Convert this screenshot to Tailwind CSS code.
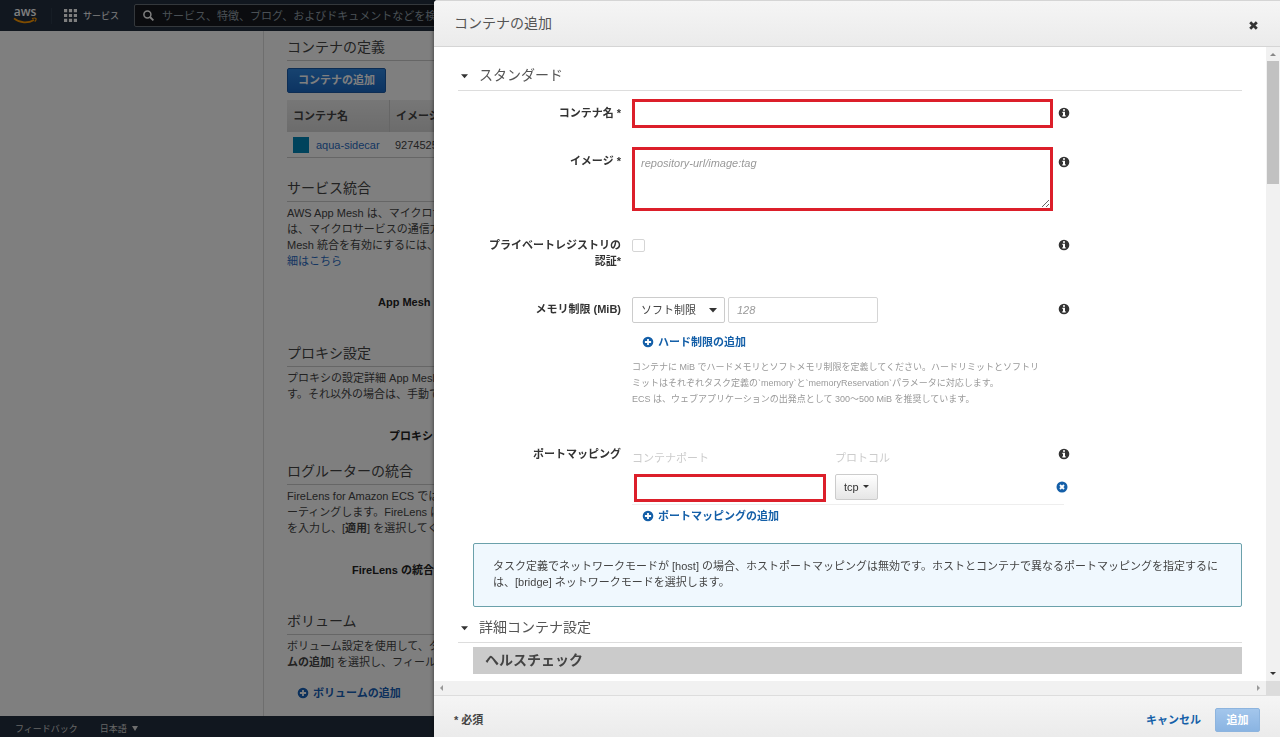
<!DOCTYPE html>
<html lang="ja">
<head>
    <meta charset="UTF-8">
    <meta name="viewport" content="width=device-width, initial-scale=1.0">
    <title>コンテナの追加</title>
    <script src="https://cdn.jsdelivr.net/npm/@tailwindcss/browser@4"></script>
    <style>
        body {
            font-family: 'Liberation Sans', 'Noto Sans CJK JP', sans-serif;
        }
    </style>
</head>
<body class="h-screen overflow-hidden bg-white text-[11px] leading-4 text-[#444]">
    <!-- Shared icons -->
    <svg class="hidden">
        <symbol id="icon-info" viewBox="0 0 12 12">
            <circle cx="6" cy="6" r="5.3" fill="#333"/>
            <path d="M5 2.2h2v1.6H5zM4.4 4.8H7v3.4h.7v1.2H4.3V8.2H5V6h-.6z" fill="#fff"/>
        </symbol>
        <symbol id="icon-plus" viewBox="0 0 12 12">
            <circle cx="6" cy="6" r="5.3" fill="currentColor"/>
            <path d="M5.1 2.9h1.8v2.2h2.2v1.8H6.9v2.2H5.1V6.9H2.9V5.1h2.2z" fill="#fff"/>
        </symbol>
        <symbol id="icon-remove" viewBox="0 0 12 12">
            <circle cx="6" cy="6" r="5.5" fill="currentColor"/>
            <path d="M4 4l4 4M8 4l-4 4" stroke="#fff" stroke-width="1.9"/>
        </symbol>
        <symbol id="icon-caret" viewBox="0 0 8 5">
            <path d="M0 0h8L4 4.6z" fill="#333"/>
        </symbol>
    </svg>

    <div class="flex h-full flex-col overflow-hidden whitespace-nowrap">
        <header class="flex h-[31px] shrink-0 items-center bg-[#232f3e] text-white">
            <a href="#" aria-label="aws" class="ml-[13px] flex w-6 flex-col items-center">
                <span class="font-['Open_Sans'] text-[12px] leading-[10px] font-semibold">aws</span>
                <svg class="h-[7px] w-6" viewBox="0 0 24 7" fill="none" stroke="#ff9900">
                    <path d="M1 1.4C7 6.4 15 6.6 21 3" stroke-width="1.7"/>
                    <path d="M19 1.6c1.8-.7 3.6-.6 4 0 .3.6-.3 2-1.2 3" stroke-width="1.2"/>
                </svg>
            </a>
            <span class="ml-3.5 h-4 w-px bg-[#2c3a4b]"></span>
            <button class="ml-3 flex items-center gap-1.5 text-[9px]">
                <svg class="size-[13px]" viewBox="0 0 13 13" fill="#fff">
                    <path d="M0 0h3.2v3.2H0zM4.9 0h3.2v3.2H4.9zM9.8 0H13v3.2H9.8zM0 4.9h3.2v3.2H0zM4.9 4.9h3.2v3.2H4.9zM9.8 4.9H13v3.2H9.8zM0 9.8h3.2V13H0zM4.9 9.8h3.2V13H4.9zM9.8 9.8H13V13H9.8z"/>
                </svg>
                サービス
            </button>
            <label class="ml-[15px] flex h-[23px] w-[560px] items-center gap-2 rounded-xs border border-[#687078] bg-[#16191f] pl-2">
                <svg class="size-[11px] shrink-0" viewBox="0 0 11 11" fill="none" stroke="#fff">
                    <circle cx="4.4" cy="4.4" r="3.5" stroke-width="1.5"/>
                    <path d="M7 7l3.4 3.4" stroke-width="1.8"/>
                </svg>
                <input type="search" aria-label="検索" placeholder="サービス、特徴、ブログ、およびドキュメントなどを検索" class="w-full text-[11px] outline-none placeholder:text-[#95a0aa]">
            </label>
        </header>

        <div class="flex min-h-0 flex-1">
            <nav class="w-[264px] shrink-0 border-r border-[#ddd]"></nav>
            <main class="min-w-0 flex-1 overflow-hidden pt-1.5 pl-[23px]">
                <h2 class="border-b border-[#ccc] pb-[3px] text-sm leading-5">コンテナの定義</h2>
                <button class="mt-[7px] block h-[25px] rounded-xs border border-[#1a5ba8] bg-linear-to-b from-[#2e86e0] to-[#1968c4] px-[10px] pb-0.5 font-bold text-white">コンテナの追加</button>
                <table class="mt-[7px] w-full table-fixed border-separate border-spacing-0 text-left">
                    <thead>
                        <tr class="h-8 bg-linear-to-b from-[#eee] to-[#d8d8d8]">
                            <th class="w-[103px] border-r border-[#ccc] pl-1.5">コンテナ名</th>
                            <th class="pl-1.5">イメージ</th>
                        </tr>
                    </thead>
                    <tbody>
                        <tr class="h-[26px]">
                            <td class="border-b border-[#ccc] pl-1.5">
                                <div class="flex items-center gap-[7px]">
                                    <span class="size-4 bg-[#0087b8]"></span>
                                    <a href="#" class="text-[#2a6cc4]">aqua-sidecar</a>
                                </div>
                            </td>
                            <td class="border-b border-[#ccc] pl-[5px]">927452518</td>
                        </tr>
                    </tbody>
                </table>

                <h2 class="mt-5 border-b border-[#ccc] pb-[3px] text-sm leading-5">サービス統合</h2>
                <p class="mt-[3px]">AWS App Mesh は、マイクロサー<br>は、マイクロサービスの通信方法<br>Mesh 統合を有効にするには、次<br><a href="#" class="text-[#2a6cc4]">細はこちら</a></p>
                <p class="mt-[25px] pl-[91px] font-bold text-[#222]">App Mesh</p>

                <h2 class="mt-[33px] border-b border-[#ccc] pb-[3px] text-sm leading-5">プロキシ設定</h2>
                <p class="mt-[3px]">プロキシの設定詳細 App Mesh<br>す。それ以外の場合は、手動で</p>
                <p class="mt-[26px] pl-[102px] font-bold text-[#222]">プロキシ</p>

                <h2 class="mt-[17px] border-b border-[#ccc] pb-[3px] text-sm leading-5">ログルーターの統合</h2>
                <p class="mt-[3px]">FireLens for Amazon ECS では<br>ーティングします。FireLens は<br>を入力し、[<b>適用</b>] を選択してく</p>
                <p class="mt-[26px] pl-[65px] font-bold text-[#222]">FireLens の統合</p>

                <h2 class="mt-[33px] border-b border-[#ccc] pb-[3px] text-sm leading-5">ボリューム</h2>
                <p class="mt-[3px]">ボリューム設定を使用して、タ<br><b>ムの追加</b>] を選択し、フィール</p>
                <button class="mt-[15px] ml-2.5 flex items-center gap-1 font-bold text-[#1660b8]">
                    <svg class="size-3"><use href="#icon-plus"/></svg>
                    ボリュームの追加
                </button>
            </main>
        </div>

        <footer class="flex h-[21px] shrink-0 items-center gap-[22px] bg-[#232f3e] pt-1 pl-[15px] text-[9px] text-[#ccc]">
            <a href="#">フィードバック</a>
            <button class="flex items-center gap-[5px]">日本語
                <svg class="h-[5px] w-1.5" viewBox="0 0 6 5"><path d="M0 0h6L3 5z" fill="#ddd"/></svg>
            </button>
        </footer>
    </div>

    <div class="fixed inset-0 bg-black/50"></div>

    <div role="dialog" aria-labelledby="dialog-title" class="fixed inset-y-0 right-0 left-[434px] flex flex-col overflow-hidden rounded-tl-sm bg-white shadow-[0_0_4px_rgba(0,0,0,0.6)]">
        <header class="flex h-[47px] shrink-0 items-center justify-between border-t border-b border-[#d5d5d5] bg-linear-to-b from-[#f5f5f5] to-[#ebebeb] pr-[22px] pl-5">
            <h1 id="dialog-title" class="pb-0.5 text-sm text-[#555]">コンテナの追加</h1>
            <button aria-label="閉じる" class="pt-1">
                <svg class="size-[9px]" viewBox="0 0 9 9" stroke="#333" stroke-width="2.8"><path d="M1.2 1.2l6.6 6.6M7.8 1.2L1.2 7.8"/></svg>
            </button>
        </header>

        <div class="grid min-h-0 flex-1 grid-cols-[minmax(0,1fr)_14px] grid-rows-[minmax(0,1fr)_14px]">
            <form class="overflow-hidden px-6 pt-[18px]">
                <h2 class="flex items-center gap-[11px] border-b border-[#ddd] pb-[5px] pl-[3px] text-sm leading-5 text-[#555]">
                    <svg class="mt-0.5 h-[5px] w-[7px]"><use href="#icon-caret"/></svg>
                    スタンダード
                </h2>

                <div class="mt-2 flex">
                    <label for="name" class="w-[163px] shrink-0 pt-1.5 text-right font-bold text-[#333]">コンテナ名 *</label>
                    <input id="name" type="text" class="ml-[11px] h-[29px] w-[421px] border-3 border-[#dc1f2a] px-1.5">
                    <svg class="mt-2 ml-[5px] size-3"><use href="#icon-info"/></svg>
                </div>

                <div class="mt-[19px] flex">
                    <label for="image" class="w-[163px] shrink-0 pt-1.5 text-right font-bold text-[#333]">イメージ *</label>
                    <textarea id="image" placeholder="repository-url/image:tag" class="ml-[11px] h-16 w-[421px] border-3 border-[#dc1f2a] px-1.5 py-[5px] placeholder:text-[#999] placeholder:italic"></textarea>
                    <svg class="mt-[9px] ml-[5px] size-3"><use href="#icon-info"/></svg>
                </div>

                <div class="mt-[26px] flex">
                    <label for="private" class="w-[163px] shrink-0 text-right font-bold text-[#333]">プライベートレジストリの<br>認証*</label>
                    <div class="ml-[11px] w-[421px] pt-0.5">
                        <input id="private" type="checkbox" class="block size-[13px] appearance-none rounded-xs border border-[#d5d5d5] bg-white">
                    </div>
                    <svg class="mt-[2px] ml-[5px] size-3"><use href="#icon-info"/></svg>
                </div>

                <div class="mt-7 flex">
                    <label for="memory" class="w-[163px] shrink-0 pt-1 text-right font-bold text-[#333]">メモリ制限 (MiB)</label>
                    <div class="ml-[11px] w-[421px]">
                        <div class="flex gap-[3px]">
                            <div class="relative">
                                <select aria-label="制限の種類" class="h-[26px] w-[93px] appearance-none rounded-xs border border-[#ccc] bg-white pl-2">
                                    <option>ソフト制限</option>
                                    <option>ハード制限</option>
                                </select>
                                <svg class="pointer-events-none absolute top-[11px] right-2 h-[5px] w-2"><use href="#icon-caret"/></svg>
                            </div>
                            <input id="memory" type="text" placeholder="128" class="h-[26px] w-[150px] rounded-xs border border-[#d5d5d5] px-2 placeholder:text-[#999] placeholder:italic">
                        </div>
                        <button type="button" class="mt-[11px] ml-2.5 flex items-center gap-1 font-bold text-[#145fa8]">
                            <svg class="size-3"><use href="#icon-plus"/></svg>
                            ハード制限の追加
                        </button>
                        <p class="mt-[9px] text-[9px] leading-4 whitespace-nowrap text-[#999]">コンテナに MiB でハードメモリとソフトメモリ制限を定義してください。ハードリミットとソフトリ<br>ミットはそれぞれタスク定義の`memory`と`memoryReservation`パラメータに対応します。<br>ECS は、ウェブアプリケーションの出発点として 300～500 MiB を推奨しています。</p>
                    </div>
                    <svg class="mt-1.5 ml-[5px] size-3"><use href="#icon-info"/></svg>
                </div>

                <div class="mt-[39px] flex">
                    <span class="w-[163px] shrink-0 text-right font-bold text-[#333]">ポートマッピング</span>
                    <div class="ml-[11px] w-[432px]">
                        <div class="flex border-b border-[#eee] pt-1 pb-0.5">
                            <div class="w-[203px]">
                                <label for="port" class="block text-[#ccc]">コンテナポート</label>
                                <input id="port" type="text" class="mt-2 ml-0.5 block h-7 w-48 border-3 border-[#dc1f2a] px-1.5">
                            </div>
                            <div class="flex-1">
                                <label for="protocol" class="block text-[#ccc]">プロトコル</label>
                                <div class="relative mt-2 w-[43px]">
                                    <select id="protocol" class="h-[26px] w-full appearance-none rounded-xs border border-[#ccc] bg-linear-to-b from-white to-[#e6e6e6] pl-2 text-[#333]">
                                        <option>tcp</option>
                                        <option>udp</option>
                                    </select>
                                    <svg class="pointer-events-none absolute top-[11px] right-[9px] h-[3px] w-1.5" viewBox="0 0 6 3"><path d="M0 0h6L3 3z" fill="#333"/></svg>
                                </div>
                            </div>
                            <button type="button" aria-label="削除" class="mt-[31px] mr-[-4px] size-3 self-start text-[#145fa8]">
                                <svg class="size-3"><use href="#icon-remove"/></svg>
                            </button>
                        </div>
                        <button type="button" class="mt-[3px] ml-2.5 flex items-center gap-1 font-bold text-[#145fa8]">
                            <svg class="size-3"><use href="#icon-plus"/></svg>
                            ポートマッピングの追加
                        </button>
                    </div>
                    <svg class="mt-[2px] -ml-1.5 size-3"><use href="#icon-info"/></svg>
                </div>

                <div class="mt-[19px] ml-[15px] rounded-xs border border-[#6ba1ab] bg-[#f0f8fe] px-[19px] pt-[14px] pb-4">
                    タスク定義でネットワークモードが [host] の場合、ホストポートマッピングは無効です。ホストとコンテナで異なるポートマッピングを指定するには、[bridge] ネットワークモードを選択します。
                </div>

                <h2 class="mt-2.5 flex items-center gap-[11px] border-b border-[#ddd] pb-[5px] pl-[3px] text-sm leading-5 text-[#555]">
                    <svg class="mt-0.5 h-[5px] w-[7px]"><use href="#icon-caret"/></svg>
                    詳細コンテナ設定
                </h2>
                <h3 class="mt-1 ml-[15px] h-[27px] bg-[#cbcbcb] pl-3 text-sm leading-[26px] font-bold">ヘルスチェック</h3>
            </form>

            <!-- Vertical scrollbar -->
            <div class="flex flex-col items-center bg-[#f1f1f1]">
                <svg class="size-[14px] shrink-0" viewBox="0 0 14 14"><path d="M4 9h6L7 6z" fill="#888"/></svg>
                <div class="h-[123px] w-3 bg-[#c1c1c1]"></div>
                <svg class="mt-auto size-[14px] shrink-0" viewBox="0 0 14 14"><path d="M4 5h6L7 8z" fill="#333"/></svg>
            </div>

            <!-- Horizontal scrollbar -->
            <div class="flex justify-between bg-[#f1f1f1]">
                <svg class="size-[14px]" viewBox="0 0 14 14"><path d="M9 4v6L6 7z" fill="#999"/></svg>
                <svg class="size-[14px]" viewBox="0 0 14 14"><path d="M5 4v6l3-3z" fill="#999"/></svg>
            </div>
            <div class="bg-[#dcdcdc]"></div>
        </div>

        <footer class="flex h-[42px] shrink-0 items-center border-t border-[#ddd] bg-linear-to-b from-[#f5f5f5] to-[#ebebeb] pt-1.5 pr-5 pl-5 font-bold">
            <span>* 必須</span>
            <button class="ml-auto text-[#145fa8]">キャンセル</button>
            <button disabled class="ml-[14px] h-6 w-[45px] rounded-xs border border-[#8db4de] bg-linear-to-b from-[#a3c6ec] to-[#8ab4e2] text-white">追加</button>
        </footer>
    </div>
</body>
</html>
